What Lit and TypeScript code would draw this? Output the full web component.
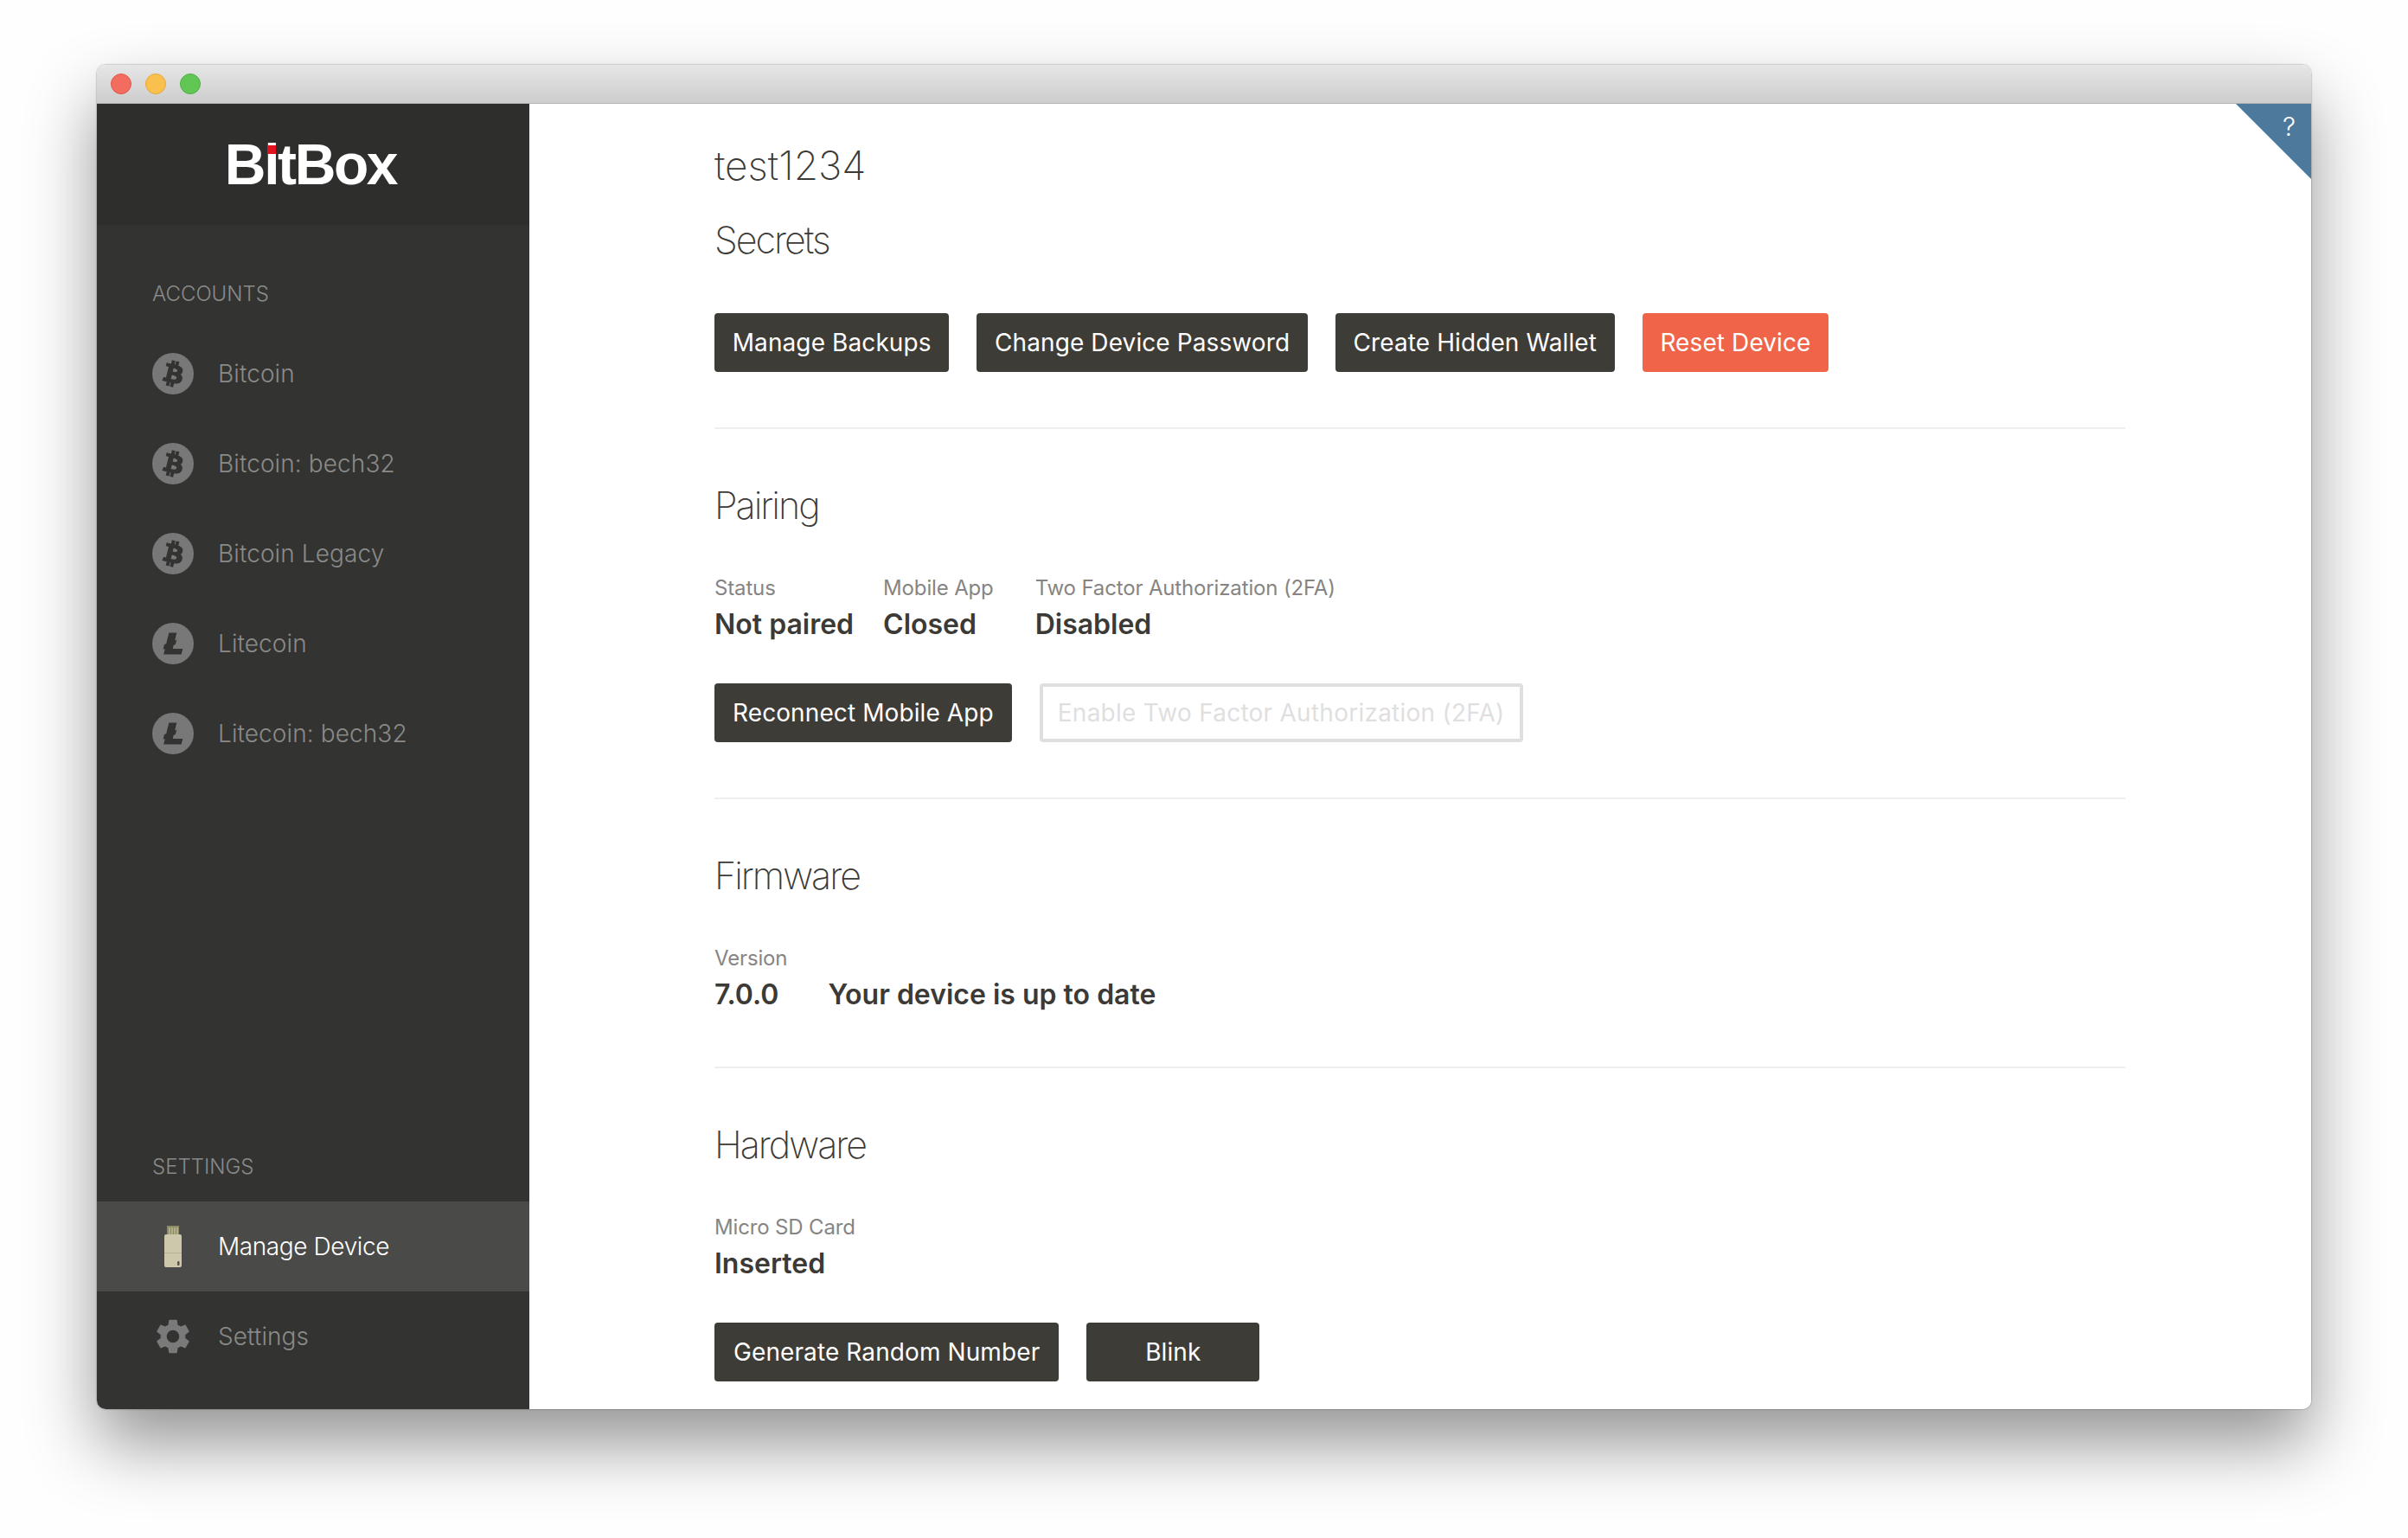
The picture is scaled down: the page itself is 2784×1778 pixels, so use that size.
import { LitElement, html, css, svg } from "lit";
import { customElement } from "lit/decorators.js";

const BTC = "M23.189 14.02c.314-2.096-1.283-3.223-3.465-3.975l.708-2.84-1.728-.43-.69 2.765c-.454-.114-.92-.22-1.385-.326l.695-2.783L15.596 6l-.708 2.839c-.376-.086-.746-.17-1.104-.26l.002-.009-2.384-.595-.46 1.846s1.283.294 1.256.312c.7.175.826.638.805 1.006l-.806 3.235c.048.012.11.03.18.057l-.183-.045-1.13 4.532c-.086.212-.303.531-.793.41.018.025-1.256-.313-1.256-.313l-.858 1.978 2.25.561c.418.105.828.215 1.231.318l-.715 2.872 1.727.43.708-2.84c.472.127.93.245 1.378.357l-.706 2.828 1.728.43.715-2.866c2.948.558 5.164.333 6.097-2.333.752-2.146-.037-3.385-1.588-4.192 1.13-.26 1.98-1.003 2.207-2.538zm-3.95 5.538c-.533 2.147-4.148.986-5.32.695l.95-3.805c1.172.293 4.929.872 4.37 3.11zm.535-5.569c-.487 1.953-3.495.96-4.47.717l.86-3.45c.975.243 4.118.696 3.61 2.733z";
const LTC = "M10.427 19.214L9 19.768l.688-2.759 1.444-.58L13.213 8h5.129l-1.519 6.196 1.41-.571-.68 2.75-1.427.571-.848 3.483H23L22.127 24H9.252z";
const GEAR = "M19.14 12.94c.04-.3.06-.61.06-.94 0-.32-.02-.64-.07-.94l2.03-1.58c.18-.14.23-.41.12-.61l-1.92-3.32c-.12-.22-.37-.29-.59-.22l-2.39.96c-.5-.38-1.03-.7-1.62-.94l-.36-2.54c-.04-.24-.24-.41-.48-.41h-3.84c-.24 0-.43.17-.47.41l-.36 2.54c-.59.24-1.13.57-1.62.94l-2.39-.96c-.22-.08-.47 0-.59.22L2.74 8.87c-.12.21-.08.47.12.61l2.03 1.58c-.05.3-.09.63-.09.94s.02.64.07.94l-2.03 1.58c-.18.14-.23.41-.12.61l1.92 3.32c.12.22.37.29.59.22l2.39-.96c.5.38 1.03.7 1.62.94l.36 2.54c.05.24.24.41.48.41h3.84c.24 0 .44-.17.47-.41l.36-2.54c.59-.24 1.13-.56 1.62-.94l2.39.96c.22.08.47 0 .59-.22l1.92-3.32c.12-.22.07-.47-.12-.61l-2.01-1.58zM12 15.6c-1.98 0-3.6-1.62-3.6-3.6s1.62-3.6 3.6-3.6 3.6 1.62 3.6 3.6-1.62 3.6-3.6 3.6z";

const accounts = [
  { name: "Bitcoin", glyph: BTC },
  { name: "Bitcoin: bech32", glyph: BTC },
  { name: "Bitcoin Legacy", glyph: BTC },
  { name: "Litecoin", glyph: LTC },
  { name: "Litecoin: bech32", glyph: LTC },
];

const coin = (d: string) => html`
  <svg class="icon" viewBox="0 0 32 32" width="48" height="48">
    <circle cx="16" cy="16" r="16" fill="#787878"></circle>
    ${svg`<path d=${d} fill="#333332" stroke="#333332" stroke-width=".8"></path>`}
  </svg>`;

const stick = html`
  <svg class="icon" viewBox="0 0 48 48" width="48" height="48">
    <rect x="17" y="0" width="14" height="11" fill="#8c8a62"></rect>
    <path d="M20 2v8M23 2v8M26 2v8M29 2v8" stroke="#d6d2b4" stroke-width="1"></path>
    <rect x="14" y="10" width="20" height="38" rx="2" fill="#cdc8ac"></rect>
    <rect x="14" y="31" width="20" height="1" fill="#b8b397"></rect>
    <rect x="29" y="41" width="2.5" height="5" rx="1" fill="#55534a"></rect>
  </svg>`;

const gear = html`
  <svg class="icon" viewBox="0 0 24 24" width="48" height="48">
    <path d=${GEAR} fill="#7a7a7a"></path>
  </svg>`;

@customElement("app-root")
export class AppRoot extends LitElement {
  static styles = css`
    :host {
      display: block;
      padding: 75px 112px 149px;
      background: #fefefe;
      font-family: Inter, "Liberation Sans", sans-serif;
      color: #3b3a36;
    }
    .window {
      width: 2560px;
      height: 1554px;
      border-radius: 10px;
      overflow: hidden;
      display: flex;
      flex-direction: column;
      position: relative;
      background: #fff;
    }
    .shadow {
      border-radius: 10px;
      box-shadow: 0 40px 80px rgba(0, 0, 0, 0.42), 0 0 2px rgba(0, 0, 0, 0.5);
    }
    .titlebar {
      height: 45px;
      flex: none;
      box-sizing: border-box;
      padding-left: 16px;
      display: flex;
      align-items: center;
      gap: 16px;
      background: linear-gradient(#e6e6e6, #cdcdcd);
      border-bottom: 1px solid #b4b4b4;
    }
    .light {
      width: 24px;
      height: 24px;
      border-radius: 50%;
      box-sizing: border-box;
    }
    .red { background: #f26d60; border: 1px solid #e0574a; }
    .yellow { background: #f9c04e; border: 1px solid #e3a73a; }
    .green { background: #61c654; border: 1px solid #4fae44; }
    .body {
      flex: 1;
      display: flex;
      min-height: 0;
    }
    .sidebar {
      width: 500px;
      flex: none;
      background: #333332;
      display: flex;
      flex-direction: column;
    }
    .logo {
      height: 140px;
      flex: none;
      box-sizing: border-box;
      padding-right: 6px;
      background: #2e2e2d;
      display: flex;
      align-items: center;
      justify-content: center;
      color: #fff;
      font-family: "Liberation Sans", sans-serif;
      font-weight: 700;
      font-size: 66px;
      letter-spacing: -2.4px;
      line-height: 1;
    }
    .dot {
      position: relative;
    }
    .dot::before {
      content: "";
      position: absolute;
      left: 4px;
      top: 11px;
      width: 10px;
      height: 10px;
      background: #e2131f;
    }
    .group {
      height: 36px;
      line-height: 36px;
      padding-left: 64px;
      font-size: 24px;
      font-weight: 300;
      color: #8a8a88;
    }
    .accounts-label { margin-top: 62px; }
    .spacer { flex: 1; }
    .nav {
      height: 104px;
      flex: none;
      display: flex;
      align-items: center;
      padding-left: 64px;
      font-size: 28px;
      font-weight: 300;
      letter-spacing: 0.1px;
      color: #8a8a88;
    }
    .accounts { margin-top: 22px; }
    .nav .icon { flex: none; margin-right: 28px; }
    .nav.active {
      background: #4a4a48;
      color: #fff;
      letter-spacing: -0.4px;
    }
    .settings-label { margin-bottom: 22px; }
    .bottom { margin-bottom: 32px; }
    .main {
      flex: 1;
      min-width: 0;
      padding: 0 215px 0 214px;
      overflow: hidden;
    }
    h1, h2 {
      margin: 0;
      font-weight: 200;
      font-size: 43px;
      letter-spacing: -2px;
      line-height: 72px;
    }
    h1 { margin-top: 35px; font-size: 46px; letter-spacing: 0; }
    h2 { margin-top: 14px; }
    .section {
      border-top: 2px solid #eeeeee;
      margin-top: 64px;
      padding-top: 52px;
    }
    .section.tight { margin-top: 61px; }
    .section h2 { margin-top: 0; }
    .buttons {
      display: flex;
      gap: 32px;
    }
    .btn {
      height: 68px;
      box-sizing: border-box;
      border: none;
      border-radius: 4px;
      background: #3e3c37;
      color: #fff;
      font: 400 28px Inter, "Liberation Sans", sans-serif;
      letter-spacing: 0.1px;
      padding: 0 21px;
      white-space: nowrap;
    }
    .secrets .btn { padding: 0 20.7px; }
    .btn.danger { background: #f0654a; }
    .btn.off {
      background: #fff;
      border: 4px solid #dfdfdf;
      color: #dfdfdf;
      padding: 0 17px;
      letter-spacing: 0.25px;
    }
    .btn.long { padding: 0 22px; }
    .btn.wide { width: 200px; }
    .secrets { margin-top: 49px; }
    .stats {
      display: flex;
      margin-top: 42px;
    }
    .stat .label {
      font-size: 24px;
      line-height: 36px;
      font-weight: 400;
      letter-spacing: -0.15px;
      color: #868583;
    }
    .stat .value {
      font-size: 32px;
      line-height: 44px;
      font-weight: 600;
      margin-top: 2px;
    }
    .gap-a { margin-right: 34px; }
    .gap-b { margin-right: 48px; }
    .gap-c { margin-right: 47px; }
    .stats + .buttons { margin-top: 46px; }
    .corner {
      position: absolute;
      top: 45px;
      right: 0;
      width: 87px;
      height: 87px;
      background: #4d7a9c;
      clip-path: polygon(0 0, 100% 0, 100% 100%);
      color: #fff;
      font-size: 30px;
      font-weight: 300;
      line-height: 36px;
      text-align: right;
    }
    .corner span {
      display: block;
      margin: 8px 18px 0 0;
    }
  `;

  render() {
    return html`
      <div class="shadow">
        <div class="window">
          <div class="titlebar">
            <span class="light red"></span>
            <span class="light yellow"></span>
            <span class="light green"></span>
          </div>
          <div class="body">
            <aside class="sidebar">
              <div class="logo">B<span class="dot">i</span>tBox</div>
              <div class="group accounts-label">ACCOUNTS</div>
              <div class="accounts">
                ${accounts.map((a) => html`<div class="nav">${coin(a.glyph)}<span>${a.name}</span></div>`)}
              </div>
              <div class="spacer"></div>
              <div class="group settings-label">SETTINGS</div>
              <div class="nav active">${stick}<span>Manage Device</span></div>
              <div class="nav bottom">${gear}<span>Settings</span></div>
            </aside>
            <main class="main">
              <h1>test1234</h1>
              <h2>Secrets</h2>
              <div class="buttons secrets">
                <button class="btn">Manage Backups</button>
                <button class="btn">Change Device Password</button>
                <button class="btn">Create Hidden Wallet</button>
                <button class="btn danger">Reset Device</button>
              </div>
              <section class="section">
                <h2>Pairing</h2>
                <div class="stats">
                  <div class="stat gap-a"><div class="label">Status</div><div class="value">Not paired</div></div>
                  <div class="stat gap-b"><div class="label">Mobile App</div><div class="value">Closed</div></div>
                  <div class="stat"><div class="label">Two Factor Authorization (2FA)</div><div class="value">Disabled</div></div>
                </div>
                <div class="buttons">
                  <button class="btn">Reconnect Mobile App</button>
                  <button class="btn off">Enable Two Factor Authorization (2FA)</button>
                </div>
              </section>
              <section class="section">
                <h2>Firmware</h2>
                <div class="stats">
                  <div class="stat gap-c"><div class="label">Version</div><div class="value">7.0.0</div></div>
                  <div class="stat"><div class="label">&nbsp;</div><div class="value">Your device is up to date</div></div>
                </div>
              </section>
              <section class="section tight">
                <h2>Hardware</h2>
                <div class="stats">
                  <div class="stat"><div class="label">Micro SD Card</div><div class="value">Inserted</div></div>
                </div>
                <div class="buttons">
                  <button class="btn long">Generate Random Number</button>
                  <button class="btn wide">Blink</button>
                </div>
              </section>
            </main>
          </div>
          <div class="corner"><span>?</span></div>
        </div>
      </div>
    `;
  }
}
